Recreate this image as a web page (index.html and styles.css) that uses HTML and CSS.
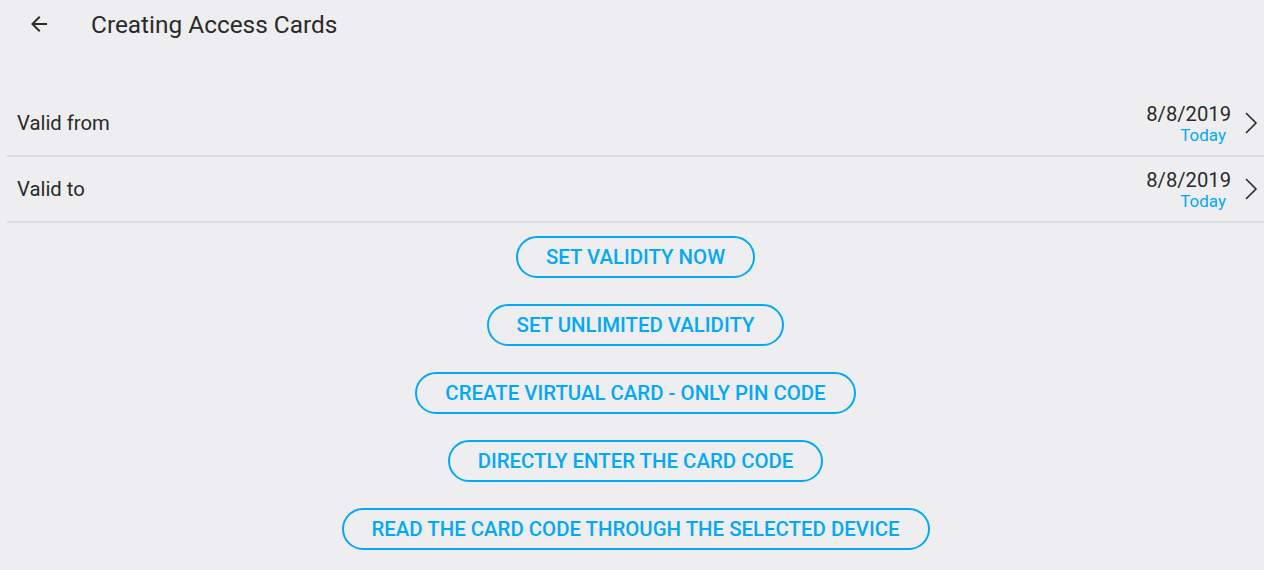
FILE: index.html
```html
<!DOCTYPE html>
<html>
<head>
<meta charset="utf-8">
<link rel="stylesheet" href="styles.css">
</head>
<body>
<div class="app">
  <header class="topbar">
    <svg class="back" width="24" height="24" viewBox="0 0 24 24"><path d="M20 11H7.83l5.59-5.59L12 4l-8 8 8 8 1.41-1.41L7.83 13H20v-2z" fill="#2a2a2a"/></svg>
    <h1 class="title">Creating Access Cards</h1>
  </header>
  <div class="content">
    <div class="rows">
      <div class="row">
        <span class="label">Valid from</span>
        <div class="value">
          <div class="date">8/8/2019</div>
          <div class="today">Today</div>
        </div>
        <svg class="chev" width="14" height="24" viewBox="0 0 14 24"><path d="M2 2 L12 12 L2 22" fill="none" stroke="#2a2a2a" stroke-width="1.6"/></svg>
      </div>
      <div class="row">
        <span class="label">Valid to</span>
        <div class="value">
          <div class="date">8/8/2019</div>
          <div class="today">Today</div>
        </div>
        <svg class="chev" width="14" height="24" viewBox="0 0 14 24"><path d="M2 2 L12 12 L2 22" fill="none" stroke="#2a2a2a" stroke-width="1.6"/></svg>
      </div>
    </div>
    <div class="actions">
      <button class="btn">SET VALIDITY NOW</button>
      <button class="btn">SET UNLIMITED VALIDITY</button>
      <button class="btn">CREATE VIRTUAL CARD - ONLY PIN CODE</button>
      <button class="btn">DIRECTLY ENTER THE CARD CODE</button>
      <button class="btn">READ THE CARD CODE THROUGH THE SELECTED DEVICE</button>
    </div>
  </div>
</div>
</body>
</html>
```
FILE: styles.css
```css
html, body {
  margin: 0;
  padding: 0;
  background: #eeeef0;
  font-family: Roboto, "Liberation Sans", sans-serif;
  color: #2a2a2a;
}
.app {
  width: 1264px;
  height: 570px;
  overflow: hidden;
}
.topbar {
  height: 48px;
  display: flex;
  align-items: center;
}
.back {
  margin-left: 27px;
  margin-right: 40px;
}
.title {
  margin: 0;
  font-size: 24.4px;
  font-weight: 400;
  color: #2a2a2a;
}
.content {
  margin-left: 7px;
}
.rows {
  margin-top: 43px;
}
.row {
  height: 64px;
  border-bottom: 2px solid #dcdcde;
  display: flex;
  align-items: center;
  padding-left: 10px;
  padding-right: 6px;
}
.label {
  flex: 1;
  font-size: 20.3px;
}
.value {
  text-align: right;
  margin-right: 13px;
  margin-top: 1px;
}
.date {
  font-size: 20.2px;
  line-height: 22px;
}
.today {
  font-size: 17px;
  line-height: 20px;
  color: #03a9f4;
  margin-right: 5px;
}
.actions {
  margin-top: 13px;
  display: flex;
  flex-direction: column;
  align-items: center;
  gap: 26px;
}
.btn {
  height: 42px;
  padding: 0 28px;
  border: 2px solid #03a9f4;
  border-radius: 21px;
  background: transparent;
  color: #03a9f4;
  font-family: Roboto, "Liberation Sans", sans-serif;
  font-size: 20.4px;
  font-weight: 500;
  letter-spacing: 0;
}
```
